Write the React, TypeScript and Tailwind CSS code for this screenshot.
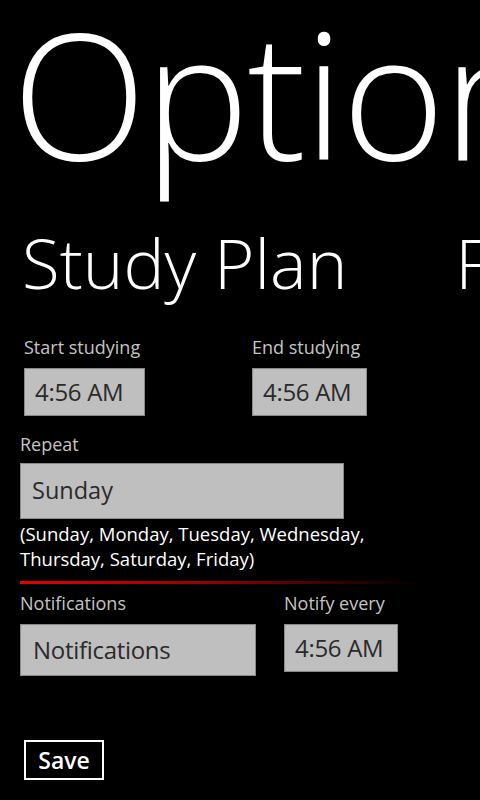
import React from "react";

const font = { fontFamily: '"Open Sans", "Noto Sans", sans-serif' };

function TimeBox({ value, w }: { value: string; w: string }) {
  return (
    <div className={`${w} h-[48px] bg-[#bfbfbf] border border-[#8a8a8a] flex items-center pl-[10px] text-[24px] text-[#2a2a2a] tracking-[-0.3px]`}>
      {value}
    </div>
  );
}

export default function App() {
  return (
    <div className="w-[480px] h-[800px] bg-black text-white overflow-hidden flex flex-col" style={font}>
      <div className="h-[222px] overflow-hidden whitespace-nowrap pl-[12px] shrink-0">
        <div className="text-[176px] leading-[220px] font-light tracking-[-2px] mt-[-18px]">Options</div>
      </div>
      <div className="h-[92px] overflow-hidden whitespace-nowrap flex pl-[22px] gap-[108px] shrink-0">
        <div className="text-[69px] leading-[80px] font-light shrink-0">Study Plan</div>
        <div className="text-[69px] leading-[80px] font-light shrink-0">Flashcards</div>
      </div>
      <div className="flex flex-col pl-[20px]">
        <div className="flex">
          <div className="flex flex-col pl-[4px] w-[232px]">
            <div className="text-[18px] leading-[24px] text-[#c4c4c4] mt-[21px]">Start studying</div>
            <div className="mt-[9px]"><TimeBox value="4:56 AM" w="w-[121px]" /></div>
          </div>
          <div className="flex flex-col">
            <div className="text-[18px] leading-[24px] text-[#c4c4c4] mt-[21px]">End studying</div>
            <div className="mt-[9px]"><TimeBox value="4:56 AM" w="w-[115px]" /></div>
          </div>
        </div>
        <div className="text-[18px] leading-[24px] text-[#c4c4c4] mt-[16px]">Repeat</div>
        <div className="mt-[7px] w-[324px] h-[56px] bg-[#bfbfbf] border border-[#8a8a8a] flex items-center pl-[11px] text-[23.5px] text-[#2a2a2a]">
          Sunday
        </div>
        <div className="text-[18.5px] leading-[25px] text-white mt-[2px] w-[420px]">
          (Sunday, Monday, Tuesday, Wednesday,<br />Thursday, Saturday, Friday)
        </div>
        <div className="mt-[10px] h-[3px] w-[400px] bg-gradient-to-r from-[#e60000] via-[#9a0000] via-45% to-transparent"></div>
        <div className="flex mt-[7px]">
          <div className="flex flex-col w-[264px]">
            <div className="text-[18px] leading-[24px] text-[#c4c4c4]">Notifications</div>
            <div className="mt-[9px] w-[236px] h-[52px] bg-[#bfbfbf] border border-[#8a8a8a] flex items-center pl-[12px] text-[24px] text-[#2a2a2a] tracking-[-0.3px]">
              Notifications
            </div>
          </div>
          <div className="flex flex-col">
            <div className="text-[18px] leading-[24px] text-[#c4c4c4]">Notify every</div>
            <div className="mt-[9px]"><TimeBox value="4:56 AM" w="w-[114px]" /></div>
          </div>
        </div>
        <div className="mt-[64px] ml-[4px] w-[80px] h-[40px] border-2 border-white flex items-center justify-center text-[23px] font-semibold">
          Save
        </div>
      </div>
    </div>
  );
}
